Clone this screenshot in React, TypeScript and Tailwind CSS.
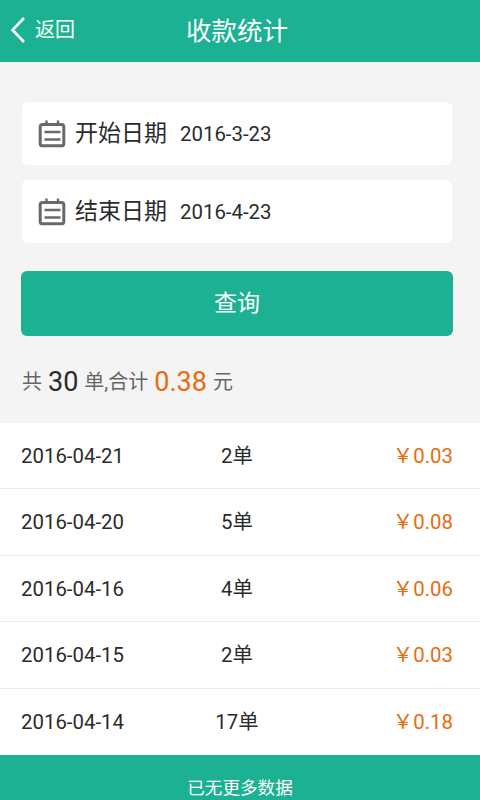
import React from 'react';

const font = { fontFamily: 'Roboto, "Noto Sans CJK SC", sans-serif' };

const rows = [
  { date: '2016-04-21', count: '2单', amount: '￥0.03' },
  { date: '2016-04-20', count: '5单', amount: '￥0.08' },
  { date: '2016-04-16', count: '4单', amount: '￥0.06' },
  { date: '2016-04-15', count: '2单', amount: '￥0.03' },
  { date: '2016-04-14', count: '17单', amount: '￥0.18' },
];

function CalendarIcon() {
  return (
    <svg width="28" height="28" viewBox="0 0 28 28" fill="none" stroke="#696969" strokeWidth="3" className="shrink-0">
      <rect x="2.2" y="4.4" width="23.6" height="21.4" rx="2.4" />
      <path d="M8.5 0.5v5M20 0.5v5" strokeWidth="2.4" />
      <path d="M6.5 12h16M6.5 19.5h16" strokeWidth="2.4" />
    </svg>
  );
}

function DateField({ label, value }: { label: string; value: string }) {
  return (
    <div className="flex h-[63px] items-center rounded-md bg-white pl-[15.5px]">
      <CalendarIcon />
      <span className="ml-[9.5px] pt-[2px] text-[23px] text-[#2b2b2b]">{label}</span>
      <span className="ml-[13px] pt-[2px] text-[20.4px] text-[#2b2b2b]">{value}</span>
    </div>
  );
}

export default function App() {
  return (
    <div className="flex h-[800px] w-[480px] flex-col overflow-hidden bg-[#f4f4f4]" style={font}>
      <header className="relative flex h-[62px] shrink-0 items-center bg-[#1cb192] pr-[6px]">
        <div className="absolute left-[10px] top-[15px] flex items-center">
          <svg width="16" height="28" viewBox="0 0 16 28" fill="none" stroke="#ffffff" strokeWidth="2.6">
            <path d="M14 2 2.5 14 14 26" />
          </svg>
          <span className="ml-[9px] text-[20px] text-white">返回</span>
        </div>
        <h1 className="w-full text-center text-[25.5px] font-normal text-white">收款统计</h1>
      </header>

      <div className="flex flex-col gap-[15px] pl-[22px] pr-[28px] pt-[40px]">
        <DateField label="开始日期" value="2016-3-23" />
        <DateField label="结束日期" value="2016-4-23" />
      </div>

      <div className="ml-[21px] mr-[27px] mt-[28px] flex h-[65px] items-center justify-center rounded-md bg-[#1cb192] pt-[2px] text-[23px] text-white">
        查询
      </div>

      <div className="flex h-[87px] items-center px-[22px] pt-[5px] text-[20px] text-[#666666]">
        <span>共</span>
        <span className="mx-[6px] text-[27px] text-[#2b2b2b]">30</span>
        <span>单,合计</span>
        <span className="mx-[6px] text-[27px] text-[#e96b10]">0.38</span>
        <span>元</span>
      </div>

      <div className="bg-white">
        {rows.map((row, i) => (
          <div
            key={row.date}
            className={`grid h-[66.4px] grid-cols-3 items-center pl-[21px] pr-[27px] pt-[1px] text-[20.4px] text-[#2b2b2b] ${i < rows.length - 1 ? 'border-b border-[#ececec]' : ''}`}
          >
            <span>{row.date}</span>
            <span className="text-center">{row.count}</span>
            <span className="text-right text-[#e96b10]">{row.amount}</span>
          </div>
        ))}
      </div>

      <footer className="flex h-[45px] shrink-0 items-start justify-center bg-[#1cb192] pt-[21px] text-[17.6px] leading-[24px] text-white">
        已无更多数据
      </footer>
    </div>
  );
}
